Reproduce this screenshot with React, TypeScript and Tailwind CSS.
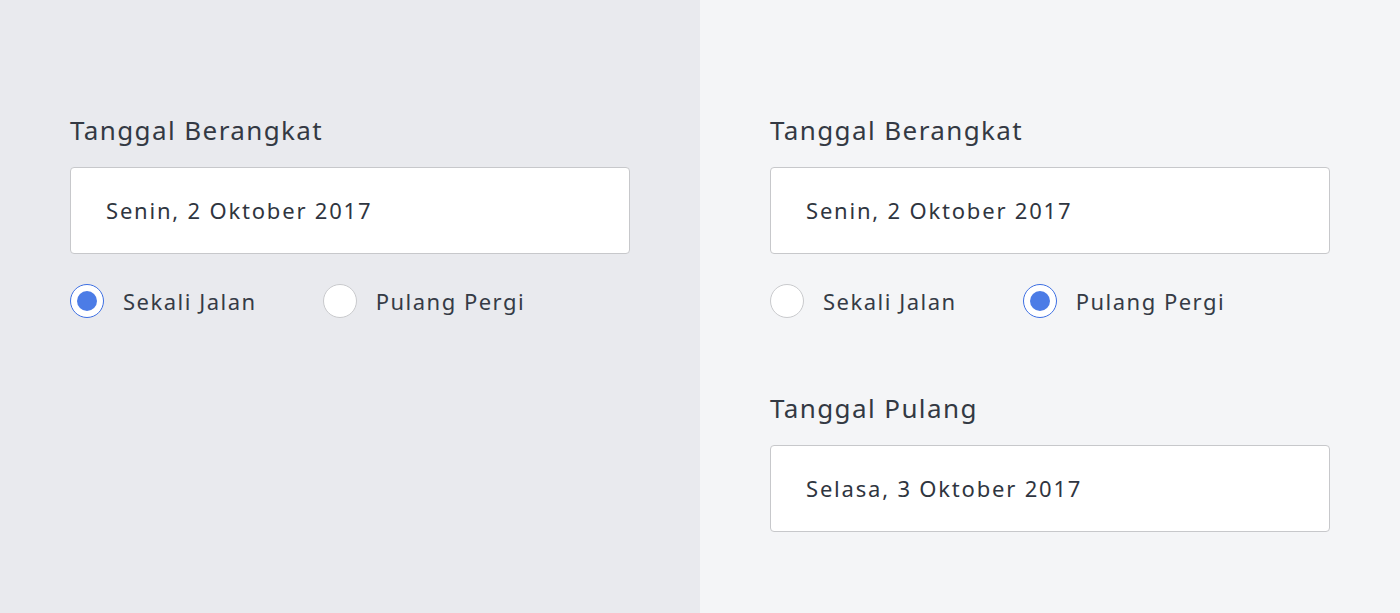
import { useState } from "react";

type Trip = "oneway" | "round";

function Radio({
  checked,
  label,
  onClick,
}: {
  checked: boolean;
  label: string;
  onClick: () => void;
}) {
  return (
    <button
      type="button"
      onClick={onClick}
      className="flex items-center gap-[19px] cursor-pointer"
    >
      <span
        className={
          checked
            ? "w-[34px] h-[34px] rounded-full bg-white border-[1.5px] border-[#3d6fe3] flex items-center justify-center"
            : "w-[34px] h-[34px] rounded-full bg-white border-[1.5px] border-[#c9cacd]"
        }
      >
        {checked && <span className="w-[20px] h-[20px] rounded-full bg-[#4c7ce6]" />}
      </span>
      <span className="text-[22px] tracking-[1.5px] text-[#353b46]">{label}</span>
    </button>
  );
}

function Field({ label, value }: { label: string; value: string }) {
  return (
    <div className="flex flex-col">
      <div className="text-[26px] leading-[32px] tracking-[1.4px] text-[#333943]">{label}</div>
      <div className="mt-[21px] w-[560px] h-[87px] bg-white border border-[#c7c8cb] rounded-[4px] flex items-center pl-[35px]">
        <span className="text-[22px] tracking-[1.8px] text-[#2f3540]">{value}</span>
      </div>
    </div>
  );
}

function Panel({ initial, bg }: { initial: Trip; bg: string }) {
  const [trip, setTrip] = useState<Trip>(initial);
  return (
    <div className={`w-[700px] h-[613px] pt-[114px] pl-[70px] ${bg}`}>
      <Field label="Tanggal Berangkat" value="Senin, 2 Oktober 2017" />
      <div className="mt-[30px] flex items-center gap-[66px]">
        <Radio checked={trip === "oneway"} label="Sekali Jalan" onClick={() => setTrip("oneway")} />
        <Radio checked={trip === "round"} label="Pulang Pergi" onClick={() => setTrip("round")} />
      </div>
      {trip === "round" && (
        <div className="mt-[74px]">
          <Field label="Tanggal Pulang" value="Selasa, 3 Oktober 2017" />
        </div>
      )}
    </div>
  );
}

export default function App() {
  return (
    <div className="flex w-[1400px] h-[613px] overflow-hidden font-['Noto_Sans',sans-serif]">
      <Panel initial="oneway" bg="bg-[#e9eaee]" />
      <Panel initial="round" bg="bg-[#f4f5f7]" />
    </div>
  );
}
